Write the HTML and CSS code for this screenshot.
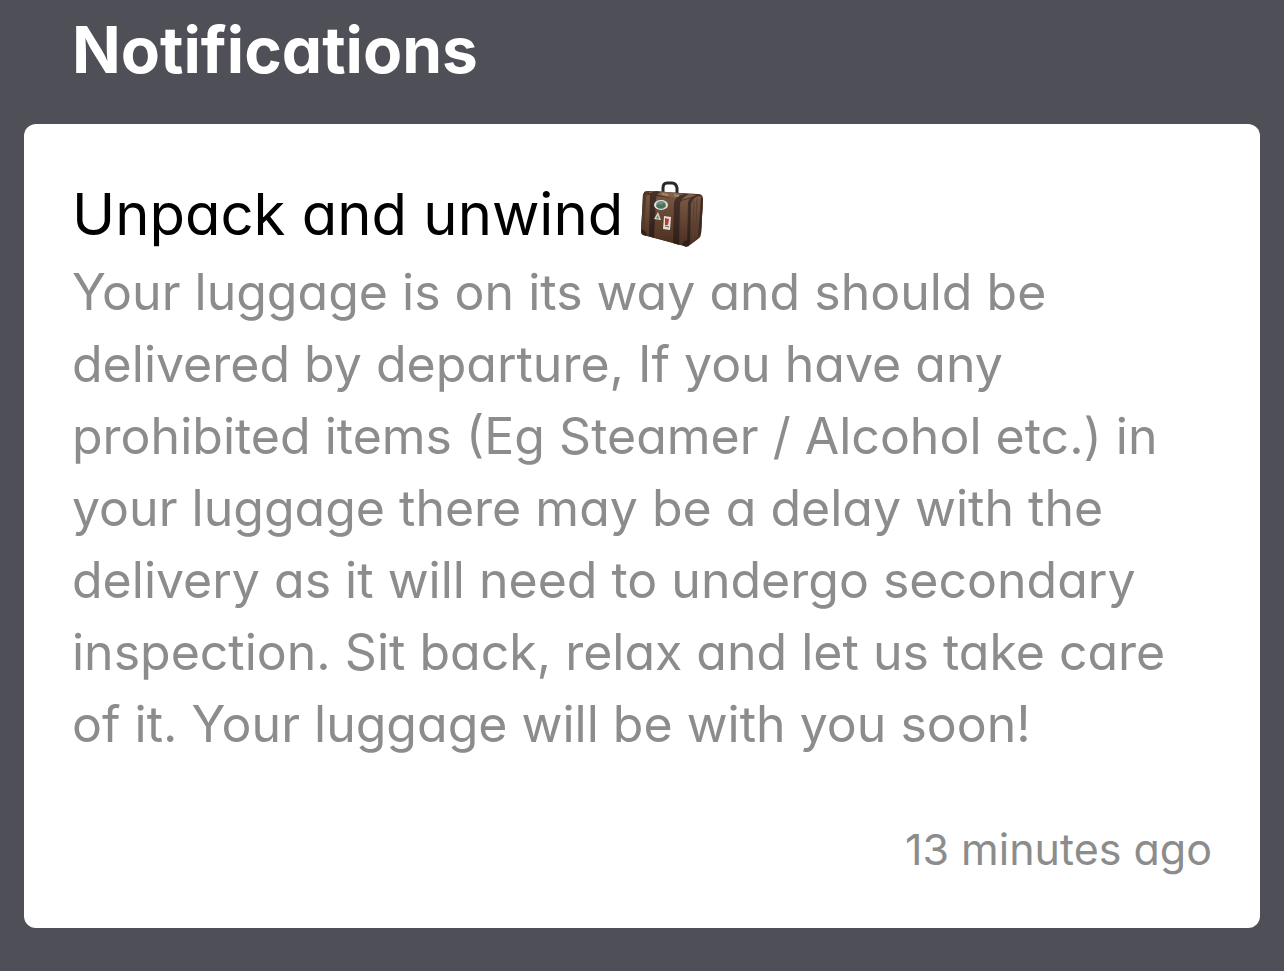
FILE: index.html
```
<!DOCTYPE html>
<html lang="en">
<head>
<meta charset="utf-8">
<meta name="viewport" content="width=device-width, initial-scale=1">
<title>Notifications</title>
<link rel="stylesheet" href="styles.css">
</head>
<body>
<main class="page">
  <h1 class="page-title">Notifications</h1>
  <article class="card">
    <h2 class="card-title">
      <span>Unpack and unwind</span>
      <svg class="luggage" viewBox="0 0 84 84" role="img" aria-label="Luggage">
        <defs>
          <linearGradient id="front" x1="0" y1="0" x2="0" y2="1">
            <stop offset="0" stop-color="#79583f"/>
            <stop offset="1" stop-color="#4a2e21"/>
          </linearGradient>
          <linearGradient id="side" x1="0" y1="0" x2="0" y2="1">
            <stop offset="0" stop-color="#7a5a45"/>
            <stop offset="1" stop-color="#4c3023"/>
          </linearGradient>
          <linearGradient id="strap" x1="0" y1="0" x2="0" y2="1">
            <stop offset="0" stop-color="#47322a"/>
            <stop offset="1" stop-color="#2f1f18"/>
          </linearGradient>
        </defs>
        <path d="M32 22V16Q32 11 36 11H41Q45 11 46 16V23" fill="none" stroke="#29282a" stroke-width="3"/>
        <path d="M13 20Q14 19 18 19L67 22Q72 22 72 27L70 62Q70 65 67 67L59 73Q57 75 53 74L12 63Q10 62 10 59Z" fill="#49301f"/>
        <path d="M12 22L46 27Q50 28 51 33L50 73L13 63Q10 62 10 59Z" fill="url(#front)"/>
        <path d="M50 29L68 24Q72 24 72 29L70 62L58 73L50 72Z" fill="url(#side)"/>
        <path d="M14 20L26 19L68 23L50 28Z" fill="#80614b"/>
        <path d="M19 22Q21 19 26 19L30 20Q25 22 25 28L23 66L18 64Z" fill="url(#strap)"/>
        <path d="M43 31Q44 24 53 22L58 22Q50 26 49 32L48 73L42 71Z" fill="url(#strap)"/>
        <path d="M57 30Q59 25 65 23L68 23Q61 27 60 32L59 72L56 74Z" fill="url(#strap)"/>
        <path d="M12 22Q13 20 17 19L20 19Q15 22 15 26L13 63L10 61Z" fill="#51392c"/>
        <path d="M63 29L62 68M66 27L65 66" stroke="#59402f" stroke-width="1"/>
        <path d="M70 25L72 27L70 61L67 66Z" fill="#3d2a22"/>
        <path d="M10 57Q15 58 16 64L12 63ZM51 73Q52 68 58 68V74L55 75Z" fill="#30201a"/>
        <path d="M31 21L37 22V24L31 23ZM43 22L48 23V25L43 24Z" fill="#a28a6b"/>
        <ellipse cx="30" cy="33" rx="7" ry="5" fill="#e5e2d5"/>
        <ellipse cx="30" cy="33" rx="5" ry="4" fill="#668e98"/>
        <path d="M25 34L28 32L30 33L33 31L35 34L32 36H27Z" fill="#4f7150"/>
        <path d="M27 40L30 48L23 47Z" fill="#d9d9c8"/>
        <path d="M27 43L28 47L25 46Z" fill="#668e70"/>
        <path d="M33 44L40 45L39 58L32 57Z" fill="#e5dfd2"/>
        <path d="M34 46L38 47L37 53L34 53Z" fill="#b63d35"/>
        <path d="M34 54L38 55" stroke="#485d6c" stroke-width="1"/>
      </svg>
    </h2>
    <p class="message">Your luggage is on its way and should be delivered by departure, If you have any prohibited items (Eg Steamer / Alcohol etc.) in your luggage there may be a delay with the delivery as it will need to undergo secondary inspection. Sit back, relax and let us take care of it. Your luggage will be with you soon!</p>
    <time class="timestamp">13 minutes ago</time>
  </article>
</main>
</body>
</html>
```
FILE: styles.css
```
* { box-sizing: border-box; }
body {
  margin: 0;
  background: #4f4f57;
  font-family: Inter, "Liberation Sans", sans-serif;
  font-feature-settings: "cv11" 1;
}
.page { padding: 10px 24px 40px; }
.page-title {
  margin: 0 0 34px;
  padding: 0 48px;
  color: #fff;
  font-size: 64px;
  line-height: 80px;
  font-weight: 700;
}
.card {
  display: flex;
  flex-direction: column;
  padding: 48px;
  background: #fff;
  border-radius: 12px;
}
.card-title {
  display: flex;
  align-items: center;
  gap: 8px;
  margin: 0;
  color: #000;
  font-size: 58px;
  line-height: 84px;
  font-weight: 400;
}
.luggage { width: 84px; height: 84px; flex: none; }
.message {
  margin: 0;
  color: #8c8c8c;
  font-size: 50px;
  line-height: 72px;
}
.timestamp {
  align-self: flex-end;
  margin-top: 58px;
  color: #8c8c8c;
  font-size: 43px;
  line-height: 62px;
}
```
